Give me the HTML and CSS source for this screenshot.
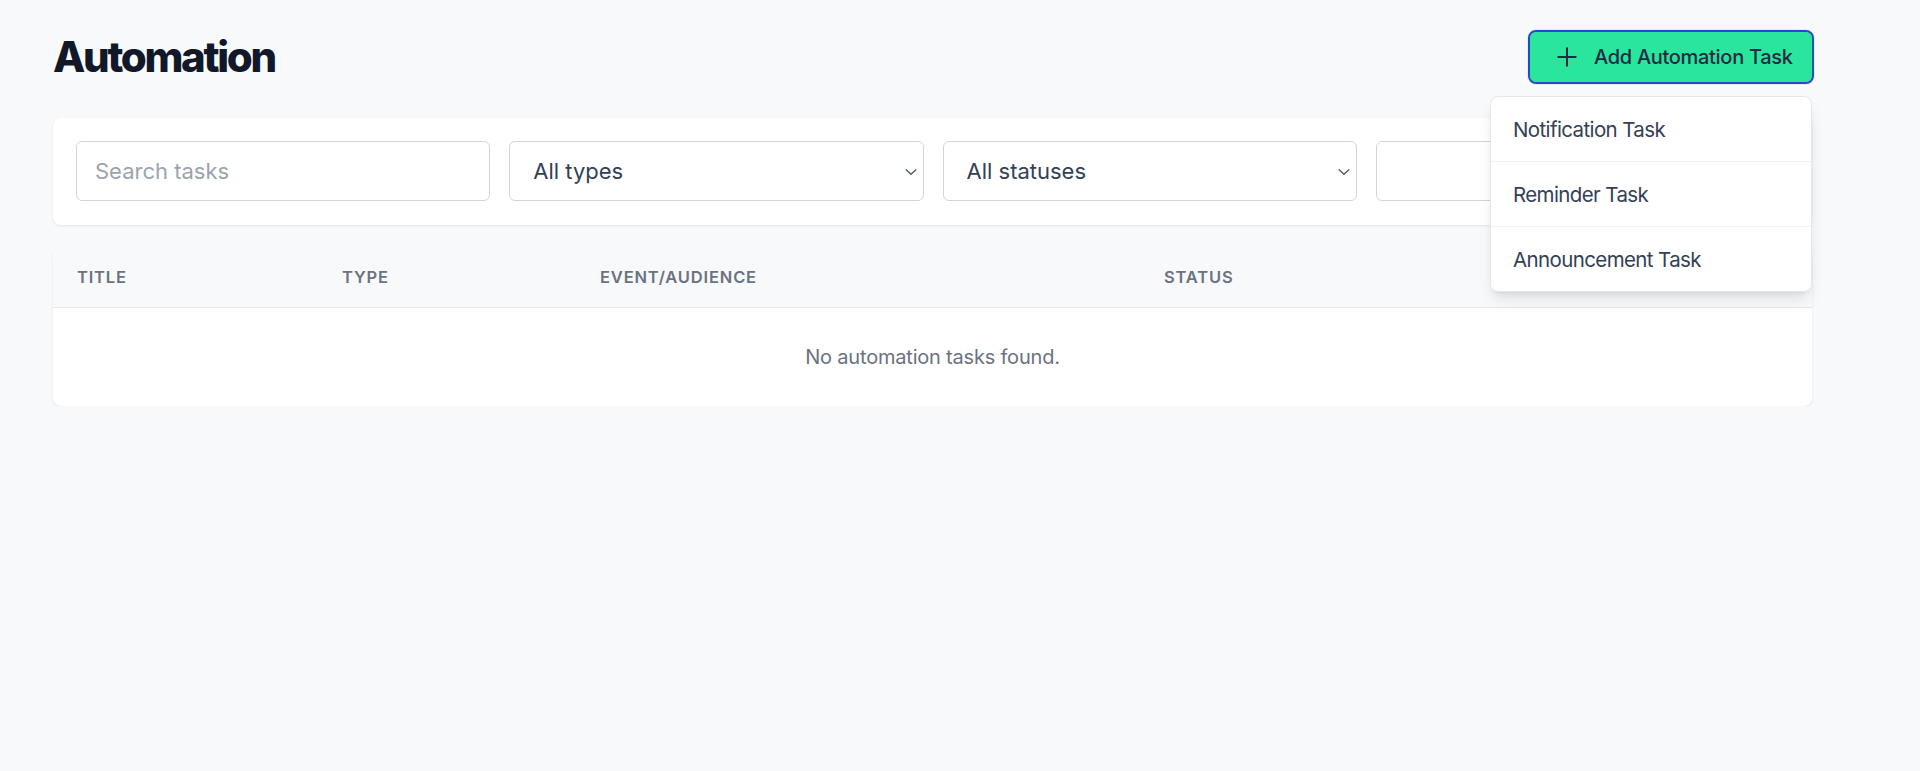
FILE: index.html
```html
<!DOCTYPE html>
<html lang="en">
<head>
<meta charset="utf-8">
<title>Automation</title>
<link rel="stylesheet" href="styles.css">
</head>
<body>
<main class="page">
  <header class="page-header">
    <h1 class="page-title">Automation</h1>
    <div class="add-menu">
      <button class="add-btn" type="button">
        <svg class="add-icon" viewBox="0 0 24 24" width="22" height="22" aria-hidden="true">
          <path d="M12 2.5v19M2.5 12h19" fill="none" stroke="currentColor" stroke-width="2.2" stroke-linecap="round"/>
        </svg>
        <span>Add Automation Task</span>
      </button>
      <ul class="menu">
        <li class="menu-item">Notification Task</li>
        <li class="menu-item">Reminder Task</li>
        <li class="menu-item">Announcement Task</li>
      </ul>
    </div>
  </header>

  <section class="card filters">
    <input class="field field-input" type="text" placeholder="Search tasks">
    <div class="field field-select">
      <span>All types</span>
      <svg class="chev" viewBox="0 0 12 6" width="12" height="6" aria-hidden="true"><path d="M0.8 0.6 6 5.3 11.2 0.6" fill="none" stroke="currentColor" stroke-width="1.3"/></svg>
    </div>
    <div class="field field-select">
      <span>All statuses</span>
      <svg class="chev" viewBox="0 0 12 6" width="12" height="6" aria-hidden="true"><path d="M0.8 0.6 6 5.3 11.2 0.6" fill="none" stroke="currentColor" stroke-width="1.3"/></svg>
    </div>
    <div class="field field-empty"></div>
  </section>

  <section class="card table-card">
    <table class="tasks">
      <colgroup>
        <col class="c-title"><col class="c-type"><col class="c-event"><col class="c-status">
      </colgroup>
      <thead>
        <tr>
          <th>Title</th>
          <th>Type</th>
          <th>Event/Audience</th>
          <th>Status</th>
        </tr>
      </thead>
      <tbody>
        <tr>
          <td class="empty" colspan="4">No automation tasks found.</td>
        </tr>
      </tbody>
    </table>
  </section>
</main>
</body>
</html>
```

FILE: styles.css
```css
* { box-sizing: border-box; }

html, body {
  margin: 0;
  padding: 0;
  background: #f8f9fb;
  font-family: Inter, "Noto Sans", "Liberation Sans", sans-serif;
  color: #1f2937;
}

.page {
  width: 1759px;
  margin-left: 53px;
  padding-top: 32px;
}

.page-header {
  display: flex;
  align-items: center;
  justify-content: space-between;
}

.page-title {
  margin: 0;
  font-size: 42px;
  line-height: 50px;
  font-weight: 800;
  letter-spacing: -0.055em;
  color: #111827;
}

.add-menu {
  position: relative;
}

.add-btn {
  display: flex;
  align-items: center;
  gap: 16px;
  height: 50px;
  width: 282px;
  padding: 0 0 0 26px;
  background: #2ae59c;
  border: none;
  border-radius: 6px;
  outline: 2px solid #1d4fc4;
  box-shadow: 0 0 0 3px rgba(15, 23, 42, 0.06);
  font-family: inherit;
  font-size: 20px;
  font-weight: 500;
  letter-spacing: -0.015em;
  color: #1e2a44;
  cursor: pointer;
}

.add-icon {
  flex: none;
  color: #1e2a44;
}

.menu {
  position: absolute;
  right: 0;
  top: 64px;
  width: 322px;
  margin: 0;
  padding: 0;
  list-style: none;
  background: #fff;
  border: 1px solid #e5e7eb;
  border-radius: 8px;
  box-shadow: 0 10px 15px -3px rgba(0, 0, 0, 0.1), 0 4px 6px -4px rgba(0, 0, 0, 0.1);
  overflow: hidden;
  z-index: 10;
}

.menu-item {
  height: 65px;
  display: flex;
  align-items: center;
  padding-left: 22px;
  font-size: 20.5px;
  letter-spacing: -0.03em;
  color: #334155;
  border-bottom: 1px solid #f0f2f5;
}

.menu-item:last-child {
  border-bottom: none;
  height: 64px;
}

.card {
  background: #fff;
  border-radius: 8px;
  box-shadow: 0 1px 3px rgba(0, 0, 0, 0.08), 0 1px 2px -1px rgba(0, 0, 0, 0.06);
}

.filters {
  margin-top: 36px;
  padding: 23px 22px 24px 23px;
  display: grid;
  grid-template-columns: repeat(4, 1fr);
  gap: 19px;
}

.field {
  height: 60px;
  border: 1px solid #d1d5db;
  border-radius: 6px;
  background: #fff;
  font-family: inherit;
  font-size: 22px;
  color: #334155;
}

.field-input {
  width: 100%;
  padding: 0 18px;
  outline: none;
}

.field-input::placeholder {
  color: #9ca3af;
}

.field-select {
  display: flex;
  align-items: center;
  justify-content: space-between;
  padding: 0 6px 0 23px;
}

.chev {
  color: #4b5563;
  margin-top: 2px;
}

.table-card {
  margin-top: 23px;
  overflow: hidden;
}

.tasks {
  width: 100%;
  border-collapse: collapse;
  table-layout: fixed;
}

.c-title { width: 265px; }
.c-type { width: 258px; }
.c-event { width: 564px; }

.tasks th {
  height: 59px;
  padding: 0 24px;
  text-align: left;
  background: #f8f9fb;
  border-bottom: 1px solid #e5e7eb;
  font-size: 16.5px;
  font-weight: 600;
  letter-spacing: 0.05em;
  text-transform: uppercase;
  color: #6b7280;
}

.tasks td.empty {
  height: 99px;
  text-align: center;
  font-size: 20px;
  letter-spacing: -0.01em;
  color: #6b7280;
}
```
